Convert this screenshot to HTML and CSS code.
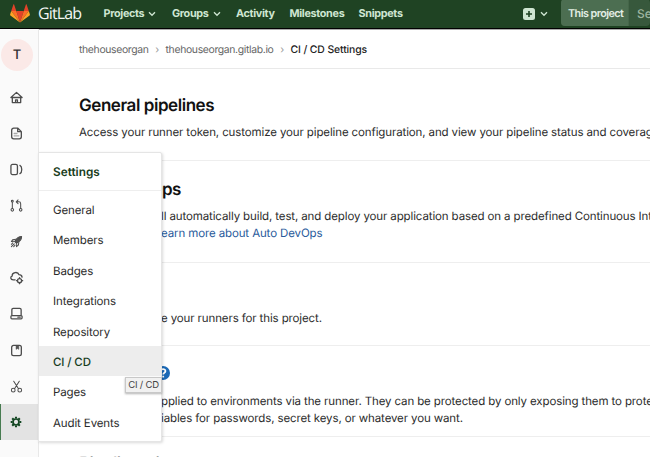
FILE: index.html
```html
<!DOCTYPE html>
<html lang="en">
<head>
<meta charset="utf-8">
<title>CI / CD Settings</title>
<link rel="stylesheet" href="styles.css">
</head>
<body>
<header class="navbar">
  <div class="brand">
    <svg class="logo" viewBox="0 0 20 19"><path fill="#e24329" d="M10 18.5 6.3 7h7.4z"/><path fill="#fc6d26" d="M10 18.5 6.3 7H1.2zM10 18.5 13.7 7h5.1z"/><path fill="#fca326" d="M1.2 7 .1 10.5c-.1.4 0 .8.3 1L10 18.5zM18.8 7l1.1 3.5c.1.4 0 .8-.3 1L10 18.5z"/><path fill="#e24329" d="M1.2 7h5.1L4.1.5c-.1-.4-.6-.4-.7 0zM18.8 7h-5.1L15.900.5c.1-.4.6-.4.7 0z"/></svg>
    <span class="wordmark">GitLab</span>
  </div>
  <nav class="links">
    <a class="projects">Projects<svg class="chev" viewBox="0 0 8 6"><path d="M1 1.200 4 4.300 7 1.200"/></svg></a>
    <a class="groups">Groups<svg class="chev" viewBox="0 0 8 6"><path d="M1 1.200 4 4.300 7 1.200"/></svg></a>
    <a class="activity">Activity</a>
    <a class="milestones">Milestones</a>
    <a class="snippets">Snippets</a>
  </nav>
  <div class="create">
    <svg class="plus" viewBox="0 0 12 12"><rect width="12" height="12" rx="2.500" fill="#cfe6d2"/><path d="M6 3v6M3 6h6" stroke="#1f4323" stroke-width="1.600"/></svg>
    <svg class="chev" viewBox="0 0 8 6"><path d="M1 1.200 4 4.300 7 1.200"/></svg>
  </div>
  <div class="search"><span class="scope">This project</span><span class="query">Search</span></div>
</header>
<div class="page">
  <aside class="sidebar">
    <div class="avatar">T</div>
    <div class="icons">
      <a><svg viewBox="0 0 14 14"><path d="M1 7 7 1.500 13 7M1 7h12M2.500 7v5.500h9V7M6 12.500v-3h2v3"/></svg></a>
      <a><svg viewBox="0 0 14 14"><path d="M8.500 1.200H4A2.200 2.200 0 0 0 1.800 3.400v7.200A2.200 2.200 0 0 0 4 12.800h6a2.200 2.200 0 0 0 2.200-2.200V5zM8.300 1.500V5h3.500"/><path class="faint" d="M4.500 7h3M4.500 9.500h5"/></svg></a>
      <a><svg viewBox="0 0 14 14"><rect x="1" y="1.500" width="7" height="11" rx="1.700"/><path d="M10.700 2.500c2.600 1.300 2.600 7.700 0 9"/></svg></a>
      <a><svg class="thin" viewBox="0 0 14 14"><circle cx="2.500" cy="11.700" r="1.400"/><circle cx="11.500" cy="11.700" r="1.400"/><circle cx="2.500" cy="2.300" r="1"/><path d="M2.500 3.500v6.700M11.500 10.200V5Q11.500 3 9.500 3H7.500M8.700 1 6.700 3l2 2"/></svg></a>
      <a><svg class="thin" viewBox="0 0 14 14"><path fill="#555" d="M12.500 1.500c-3 0-5.500 2-7 5L7.500 8.500c3-1.500 5-4 5-7z"/><path d="M6 4.500 3 5 1.500 7l3-.3M9.500 8 9 11l-2 1.500.3-3M5 7l2 2M4.500 9.500l-3 3M3 8.500l-1.500 1.500M5.500 11 4 12.500"/><circle cx="9.700" cy="4.300" r=".8" fill="#fff"/></svg></a>
      <a><svg viewBox="0 0 14 14"><path d="M5.500 9.500H3.500C.2 9.500.1 6 2.300 5.500 2 1 8.500.3 9.700 4c2 0 3 1 3.300 2.500"/><circle cx="10.300" cy="10.400" r="2.200"/><path d="M10.300 7.100v.8M10.300 12.900v.8M7 10.400h.8M12.800 10.400h.8"/></svg></a>
      <a><svg viewBox="0 0 14 14"><path d="M2 8.500V3Q2 1.500 3.500 1.500h7Q12 1.500 12 3v5.500"/><rect x="1" y="9.300" width="12" height="3.400" rx="1"/><path d="M8.500 11h2.500"/></svg></a>
      <a><svg viewBox="0 0 14 14"><rect x="1.800" y="1.500" width="10.400" height="11" rx="2"/><path fill="#555" d="M6.500 2v3.800l1.500-1 1.500 1V2z" stroke-width=".5"/></svg></a>
      <a><svg class="thin" viewBox="0 0 14 14"><circle cx="3.500" cy="11" r="2"/><circle cx="10.500" cy="11" r="2"/><path d="M5 9.200 10 1.300M9 9.200 4 1.300"/></svg></a>
      <a class="active"><svg class="gear" viewBox="0 0 14 14"><circle cx="7" cy="7" r="3.500" stroke-width="2"/><path stroke-width="2.400" d="M7 .8v2M7 11.200v2M.8 7h2M11.200 7h2M2.600 2.600l1.400 1.400M10 10l1.400 1.400M11.400 2.600 10 4M4 10l-1.400 1.400"/></svg></a>
    </div>
  </aside>
  <main class="content">
    <div class="crumbs"><span>thehouseorgan</span><i>›</i><span class="repo">thehouseorgan.gitlab.io</span><i>›</i><b>CI / CD Settings</b></div>
    <section class="general"><h2>General pipelines</h2><p class="access">Access your runner token, customize your pipeline configuration, and view your pipeline status and coverage report.</p></section>
    <section class="devops"><h2>Auto DevOps</h2><p><span class="lead"></span>ll automatically build, test, and deploy your application based on a predefined Continuous Integration</p><p><a><span class="lead"></span>earn more about Auto DevOps</a></p></section>
    <section class="runners"><h2></h2><p><span class="lead"></span>e your runners for this project.</p></section>
    <section class="variables"><h2><span class="label"></span><svg class="help" viewBox="0 0 14 14"><circle cx="7" cy="7" r="7" fill="#1b69b6"/><path d="M4.700 5.300C4.700 2.200 9.500 2.500 9.400 5.200 9.300 6.800 7.200 6.600 7.200 8.500M7.200 9.800v1.600" fill="none" stroke="#fff" stroke-width="1.800"/></svg></h2><p><span class="lead"></span>pplied to environments via the runner. They can be protected by only exposing them to protected</p><p><span class="lead"></span>iables for passwords, secret keys, or whatever you want.</p></section>
    <section class="triggers"><h2>Pipeline triggers</h2></section>
  </main>
</div>
<div class="flyout">
  <strong>Settings</strong>
  <a>General</a><a>Members</a><a>Badges</a><a>Integrations</a><a>Repository</a><a class="current">CI / CD</a><a>Pages</a><a>Audit Events</a>
</div>
<div class="tooltip">CI / CD</div>
</body>
</html>
```
FILE: styles.css
```css
* { box-sizing: border-box; }
body { margin: 0; width: 650px; height: 457px; overflow: hidden; position: relative; background: #fff; color: #2b2b2b; font: 11.5px/17px Inter, "Liberation Sans", sans-serif; letter-spacing: -.12px; text-rendering: geometricPrecision; }
svg { fill: none; overflow: visible; flex: none; }
.navbar { display: flex; height: 29px; background: #1f4323; border-bottom: 1px solid #000; box-shadow: 0 1px 0 #aaa; overflow: hidden; white-space: nowrap; }
.brand { display: flex; align-items: center; width: 103.5px; padding-left: 10px; }
.logo { width: 20px; height: 19px; margin-top: -2px; }
.wordmark { margin-left: 8px; color: #f4f7f4; font: 500 16px/26px "Open Sans", sans-serif; letter-spacing: -.85px; margin-top: -2px; }
.links { display: flex; width: 419.5px; color: #cfe6d2; font-size: 10.8px; font-weight: 700; line-height: 28px; letter-spacing: -.32px; }
.links a { display: flex; align-items: center; }
.chev { width: 8px; height: 6px; stroke: #cfe6d2; stroke-width: 1.3; }
.links .chev { margin-left: 4px; margin-top: 0; }
.projects { width: 68.5px; } .groups { width: 64px; } .activity { width: 53.5px; } .milestones { width: 69px; }
.create { display: flex; align-items: center; width: 38px; gap: 5px; padding-bottom: 1px; }
.plus { width: 12px; height: 12px; }
.search { display: flex; height: 27px; margin-top: -1px; border-radius: 4px; overflow: hidden; background: #37583c; color: #9db5a0; font-size: 10.8px; line-height: 30px; width: 89px; font-weight: 600; }
.scope { width: 68px; flex: none; padding-left: 7px; background: #4c6e51; color: #e3eee5; border-right: 1px solid #456649; letter-spacing: -.55px; }
.query { padding-left: 8px; font-size: 12px; font-weight: 500; }
.page { display: flex; height: 428px; }
.sidebar { width: 39px; flex: none; background: #fafafa; border-right: 1px solid #e8e8e8; padding-top: 10px; }
.avatar { width: 32px; height: 32px; margin-left: 1px; border-radius: 50%; background: #fbe9e7; color: #333; font-size: 13px; font-weight: 500; line-height: 32px; text-align: center; }
.icons { padding-top: 8px; }
.icons a { display: flex; align-items: center; height: 36.15px; padding-left: 10px; }
.icons svg { width: 13px; height: 13px; stroke: #4c4c4c; stroke-width: 1.4; stroke-linecap: round; stroke-linejoin: round; }
.icons .thin { stroke-width: 1.1; }
.icons .faint { stroke: #aaa; }
.icons .active { background: #e3e3e3; border-left: 1px solid #477b50; padding-left: 9px; }
.icons .gear { stroke: #124622; stroke-linecap: butt; width: 12px; height: 12px; }
.content { flex: 1; min-width: 0; padding-left: 40px; overflow: hidden; white-space: nowrap; }
.crumbs { display: flex; height: 40px; border-bottom: 1px solid #e9e9e9; line-height: 41px; font-size: 10.4px; letter-spacing: -.34px; color: #666; }
.crumbs i { width: 17px; text-align: center; font-style: normal; color: #999; }
.crumbs b { font-weight: 500; color: #222; letter-spacing: -.1px; }
section { border-bottom: 1px solid #eee; }
h2 { height: 20px; margin: 0 0 8px; color: #111; font-size: 17px; line-height: 22px; font-weight: 600; letter-spacing: -.45px; }
p { margin: 0; height: 17px; line-height: 17px; }
p a { color: #285a9b; }
.lead { display: inline-block; width: 82px; }
.general { height: 92px; padding-top: 26px; }
.general p { line-height: 18px; }
.devops { height: 102px; padding-top: 18px; }
.devops h2 { letter-spacing: -.6px; }
.devops p { line-height: 18px; }
.runners { height: 83px; padding-top: 18px; }
.runners p { line-height: 18px; }
.variables { height: 91px; padding-top: 17px; }
.variables h2 { display: flex; align-items: center; margin-bottom: 9px; }
.variables p { line-height: 18px; }
.label { width: 77px; }
.help { width: 14px; height: 14px; }
.triggers { padding-top: 17px; border: 0; }
.triggers h2 { color: #888; font-weight: 500; line-height: 21px; }
.flyout { position: absolute; left: 38px; top: 152px; width: 124px; height: 290px; background: #fff; border: 1px solid #e5e5e5; border-radius: 0 2px 2px 0; box-shadow: 1px 1px 3px rgba(0,0,0,.15); display: flex; flex-direction: column; }
.flyout strong { height: 38px; margin-bottom: 3px; padding-left: 14px; border-bottom: 1px solid #eee; font-size: 11.8px; font-weight: 600; line-height: 38px; color: #183c20; letter-spacing: 0; }
.flyout a { height: 30.4px; padding-left: 14px; line-height: 32px; }
.flyout .current { background: #ededed; color: #153b1d; font-weight: 500; }
.tooltip { position: absolute; left: 125px; top: 377px; width: 37px; height: 16px; background: #f1f1f1; border: 1px solid #c8c8c8; box-shadow: 0 1px 2px rgba(0,0,0,.3); color: #444; font-size: 9.5px; line-height: 15px; letter-spacing: -.2px; text-align: center; white-space: nowrap; }
```
